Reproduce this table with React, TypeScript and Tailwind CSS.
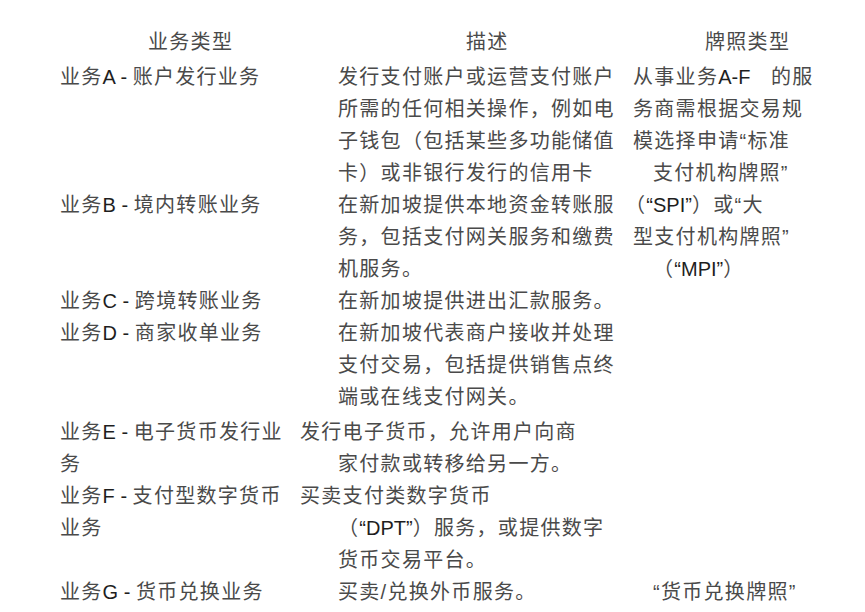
import React from "react";

const L = ({ children }: { children: React.ReactNode }) => (
  <span className="text-[#1e1e1e] tracking-normal">{children}</span>
);

const Line = ({ children, className = "" }: { children?: React.ReactNode; className?: string }) => (
  <div className={`h-[32px] leading-[32px] whitespace-nowrap ${className}`}>{children}</div>
);

export default function App() {
  return (
    <div
      className="w-[865px] h-[612px] bg-white overflow-hidden pl-[60px] pt-[26px] text-[20px] tracking-[1.3px] text-[#4a4a4a]"
      style={{ fontFamily: '"Liberation Sans", "Noto Sans CJK SC", sans-serif' }}
    >
      <div className="grid grid-cols-[278px_295px_1fr] mb-[3px]">
        <Line className="pl-[88px]">业务类型</Line>
        <Line className="pl-[128px]">描述</Line>
        <Line className="pl-[72px]">牌照类型</Line>
      </div>
      <div className="grid grid-cols-[278px_295px_1fr]">
        {/* A */}
        <div>
          <Line>业务<L>A - </L>账户发行业务</Line>
        </div>
        <div>
          <Line>发行支付账户或运营支付账户</Line>
          <Line>所需的任何相关操作，例如电</Line>
          <Line>子钱包（包括某些多功能储值</Line>
          <Line>卡）或非银行发行的信用卡</Line>
        </div>
        <div className="row-span-2">
          <Line>从事业务<L>A-F</L>&nbsp;&nbsp; 的服</Line>
          <Line>务商需根据交易规</Line>
          <Line>模选择申请“标准</Line>
          <Line className="pl-[20px]">支付机构牌照”</Line>
          <Line className="-ml-[8px]">（<L>“SPI”</L>）或“大</Line>
          <Line>型支付机构牌照”</Line>
          <Line className="pl-[20px]">（<L>“MPI”</L>）</Line>
        </div>
        {/* B */}
        <div>
          <Line>业务<L>B - </L>境内转账业务</Line>
        </div>
        <div>
          <Line>在新加坡提供本地资金转账服</Line>
          <Line>务，包括支付网关服务和缴费</Line>
          <Line>机服务。</Line>
        </div>
        {/* C */}
        <div>
          <Line>业务<L>C - </L>跨境转账业务</Line>
        </div>
        <div>
          <Line>在新加坡提供进出汇款服务。</Line>
        </div>
        <div />
        {/* D */}
        <div>
          <Line>业务<L>D - </L>商家收单业务</Line>
        </div>
        <div>
          <Line>在新加坡代表商户接收并处理</Line>
          <Line>支付交易，包括提供销售点终</Line>
          <Line>端或在线支付网关。</Line>
        </div>
        <div />
        {/* E */}
        <div className="mt-[3px]">
          <Line>业务<L>E - </L>电子货币发行业</Line>
          <Line>务</Line>
        </div>
        <div className="mt-[3px]">
          <Line className="-ml-[38px]">发行电子货币，允许用户向商</Line>
          <Line>家付款或转移给另一方。</Line>
        </div>
        <div />
        {/* F */}
        <div>
          <Line>业务<L>F - </L>支付型数字货币</Line>
          <Line>业务</Line>
        </div>
        <div>
          <Line className="-ml-[38px]">买卖支付类数字货币</Line>
          <Line>（<L>“DPT”</L>）服务，或提供数字</Line>
          <Line>货币交易平台。</Line>
        </div>
        <div />
        {/* G */}
        <div>
          <Line>业务<L>G - </L>货币兑换业务</Line>
        </div>
        <div>
          <Line>买卖/兑换外币服务。</Line>
        </div>
        <div>
          <Line className="pl-[20px]">“货币兑换牌照”</Line>
        </div>
      </div>
    </div>
  );
}
